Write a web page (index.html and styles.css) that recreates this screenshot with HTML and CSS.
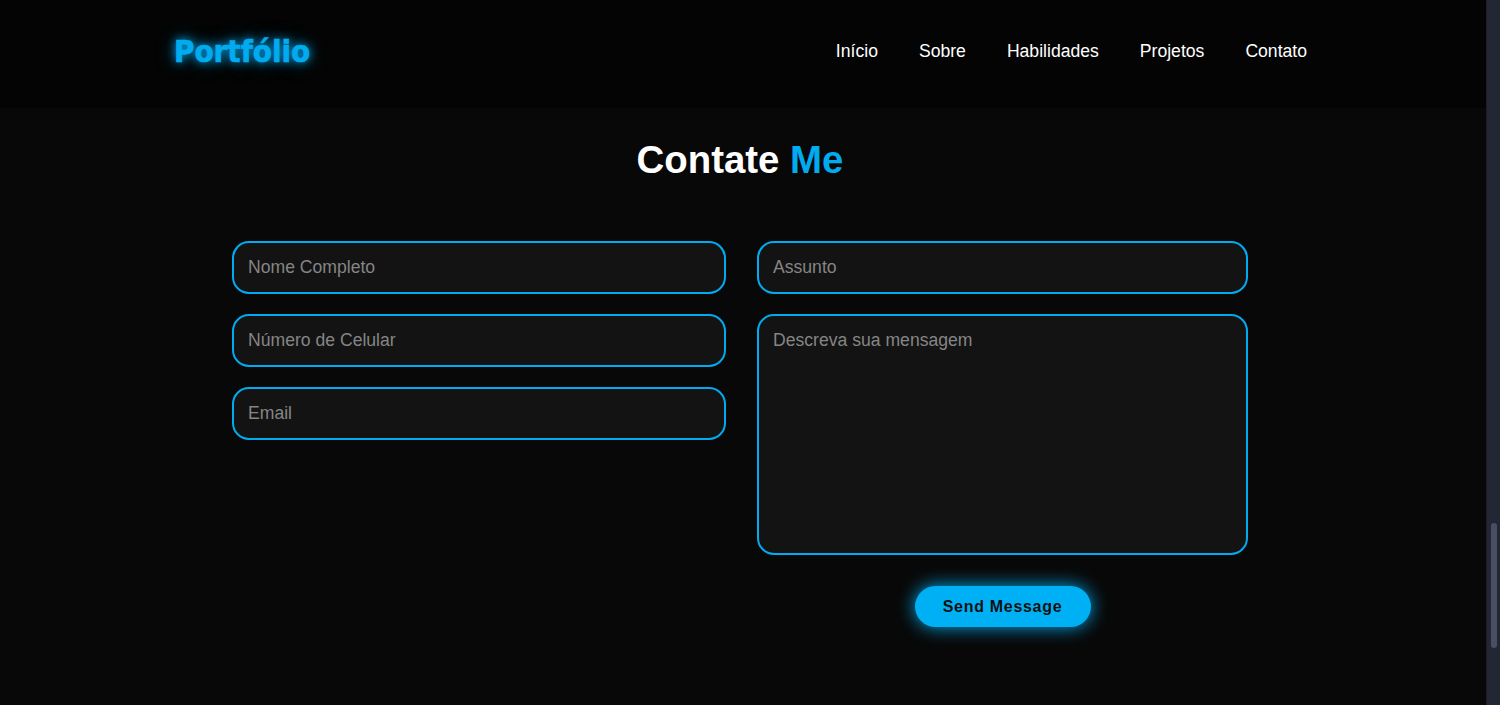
FILE: index.html
```html
<!DOCTYPE html>
<html lang="pt-BR">
<head>
<meta charset="utf-8">
<title>Portfólio - Contato</title>
<link rel="stylesheet" href="styles.css">
</head>
<body>
<div class="page">
  <header class="header">
    <a class="logo" href="#">Portfólio</a>
    <nav class="nav">
      <a href="#">Início</a>
      <a href="#">Sobre</a>
      <a href="#">Habilidades</a>
      <a href="#">Projetos</a>
      <a href="#">Contato</a>
    </nav>
  </header>
  <main class="contact">
    <h2 class="heading">Contate <span>Me</span></h2>
    <form class="form">
      <div class="col">
        <input type="text" placeholder="Nome Completo">
        <input type="text" placeholder="Número de Celular">
        <input type="email" placeholder="Email">
      </div>
      <div class="col">
        <input type="text" placeholder="Assunto">
        <textarea placeholder="Descreva sua mensagem"></textarea>
        <button type="button" class="btn">Send Message</button>
      </div>
    </form>
  </main>
</div>
<div class="scrollbar"><div class="thumb"></div></div>
</body>
</html>
```
FILE: styles.css
```css
* { box-sizing: border-box; margin: 0; padding: 0; }
html { background: #080808; }
body {
  background: #080808;
  font-family: "Liberation Sans", Arial, sans-serif;
  color: #fff;
  height: 705px;
  overflow: hidden;
  display: flex;
}
.page { flex: 1; min-width: 0; }
.scrollbar {
  width: 14px;
  background: #232734;
  border-left: 1px solid #1b1e28;
  position: relative;
}
.thumb {
  position: absolute;
  left: 4px;
  top: 523px;
  width: 6px;
  height: 125px;
  border-radius: 3px;
  background: #4a4d63;
}
.header {
  height: 108px;
  background: #040404;
  display: flex;
  align-items: center;
  justify-content: space-between;
  padding: 0 179px 6px 174px;
}
.logo {
  font-family: "DejaVu Sans Condensed", "DejaVu Sans", Verdana, sans-serif;
  font-stretch: condensed;
  font-weight: 700;
  font-size: 31px;
  color: #00abf0;
  -webkit-text-stroke: 0.6px #00abf0;
  text-decoration: none;
  text-shadow: 0 0 10px #00abf0, 0 0 18px rgba(0,171,240,0.5);
}
.nav { display: flex; gap: 41px; }
.nav a {
  color: #fff;
  text-decoration: none;
  font-size: 17.6px;
}
.contact {
  display: flex;
  flex-direction: column;
  align-items: center;
  padding-top: 29px;
}
.heading {
  font-size: 38.4px;
  font-weight: 700;
  line-height: 46px;
  margin-bottom: 58px;
  margin-right: 6px;
}
.heading span { color: #00abf0; }
.form {
  width: 1016px;
  display: grid;
  grid-template-columns: 494px 491px;
  column-gap: 31px;
  margin-right: 6px;
}
.col { display: flex; flex-direction: column; gap: 20px; }
input, textarea {
  width: 100%;
  height: 53px;
  background: #131313;
  border: 2px solid #00abf0;
  border-radius: 17px;
  padding: 0 14px;
  font-family: "Liberation Sans", Arial, sans-serif;
  font-size: 17.6px;
  color: #ddd;
  outline: none;
}
input::placeholder, textarea::placeholder { color: #858585; }
textarea {
  height: 241px;
  padding: 14px 14px;
  resize: none;
}
.btn {
  align-self: center;
  width: 176px;
  height: 41px;
  margin-top: 11px;
  border: none;
  border-radius: 21px;
  background: #00b0f5;
  box-shadow: 0 0 18px #00abf0;
  color: #111;
  font-family: "Liberation Sans", Arial, sans-serif;
  font-weight: 700;
  font-size: 16px;
  letter-spacing: 0.7px;
  cursor: pointer;
}
```
